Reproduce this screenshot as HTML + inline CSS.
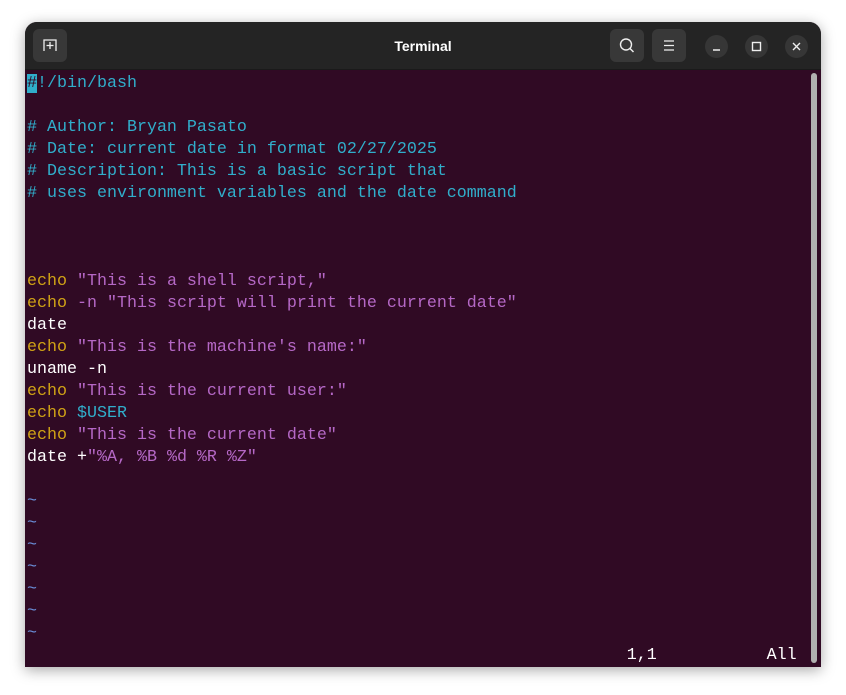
<!DOCTYPE html>
<html><head><meta charset="utf-8"><style>
html,body{margin:0;padding:0;background:#fff;width:846px;height:695px;overflow:hidden}
.win{position:absolute;left:25px;top:22px;width:796px;height:645px;border-radius:12px 12px 0 0;background:#300a24;overflow:hidden;box-shadow:0 3px 14px rgba(0,0,0,.35)}
.hdr{position:absolute;left:0;top:0;width:796px;height:47px;background:#242424;border-bottom:1px solid #1a1a1a}
.title{position:absolute;left:0;right:0;top:16px;text-align:center;color:#fff;font:bold 14px "Liberation Sans",sans-serif}
.btn{position:absolute;top:7px;width:34px;height:33px;border-radius:6px;background:#383838}
.cb{position:absolute;top:13px;width:23px;height:23px;border-radius:50%;background:#363636}
.term{position:absolute;left:2px;top:51px;font:16.67px/22px "Liberation Mono",monospace;color:#fff;white-space:pre}
.c{color:#30aecb}.y{color:#d0a215}.m{color:#b568c6}.t{color:#6a8ed8}
.sb{position:absolute;left:786px;top:51px;width:6px;height:590px;border-radius:3px;background:#b0b0b0}
</style></head><body>
<div class="win">
<div class="hdr">
<div class="btn" style="left:8px"><svg width="34" height="33"><path d="M11 22V11h12v11" fill="none" stroke="#eee" stroke-width="1.3"/><path d="M17 13v7M13.5 16.5h7" stroke="#eee" stroke-width="1.3"/></svg></div>
<div class="title">Terminal</div>
<div class="btn" style="left:585px"><svg width="34" height="33"><circle cx="16" cy="15.5" r="5.5" fill="none" stroke="#eee" stroke-width="1.4"/><path d="M20 19.5l3.5 3.5" stroke="#eee" stroke-width="1.5"/></svg></div>
<div class="btn" style="left:627px"><svg width="34" height="33"><path d="M12 12h10M12 16.5h10M12 21h10" stroke="#eee" stroke-width="1.3"/></svg></div>
<div class="cb" style="left:680px"><svg width="23" height="23"><path d="M8 15h7" stroke="#eee" stroke-width="1.4"/></svg></div>
<div class="cb" style="left:720px"><svg width="23" height="23"><rect x="7.5" y="7.5" width="8" height="8" fill="none" stroke="#eee" stroke-width="1.4"/></svg></div>
<div class="cb" style="left:760px"><svg width="23" height="23"><path d="M8 8l7 7M15 8l-7 7" stroke="#eee" stroke-width="1.4"/></svg></div>
</div>
<div class="term"><span style="background:#30aecb;color:#300a24">#</span><span class="c">!/bin/bash</span>

<span class="c"># Author: Bryan Pasato</span>
<span class="c"># Date: current date in format 02/27/2025</span>
<span class="c"># Description: This is a basic script that</span>
<span class="c"># uses environment variables and the date command</span>



<span class="y">echo</span> <span class="m">"This is a shell script,"</span>
<span class="y">echo</span> <span class="m">-n "This script will print the current date"</span>
date
<span class="y">echo</span> <span class="m">"This is the machine's name:"</span>
uname -n
<span class="y">echo</span> <span class="m">"This is the current user:"</span>
<span class="y">echo</span> <span class="c">$USER</span>
<span class="y">echo</span> <span class="m">"This is the current date"</span>
date +<span class="m">"%A, %B %d %R %Z"</span>

<span class="t">~</span>
<span class="t">~</span>
<span class="t">~</span>
<span class="t">~</span>
<span class="t">~</span>
<span class="t">~</span>
<span class="t">~</span>
                                                            1,1           All</div>
<div class="sb"></div>
</div>
</body></html>
